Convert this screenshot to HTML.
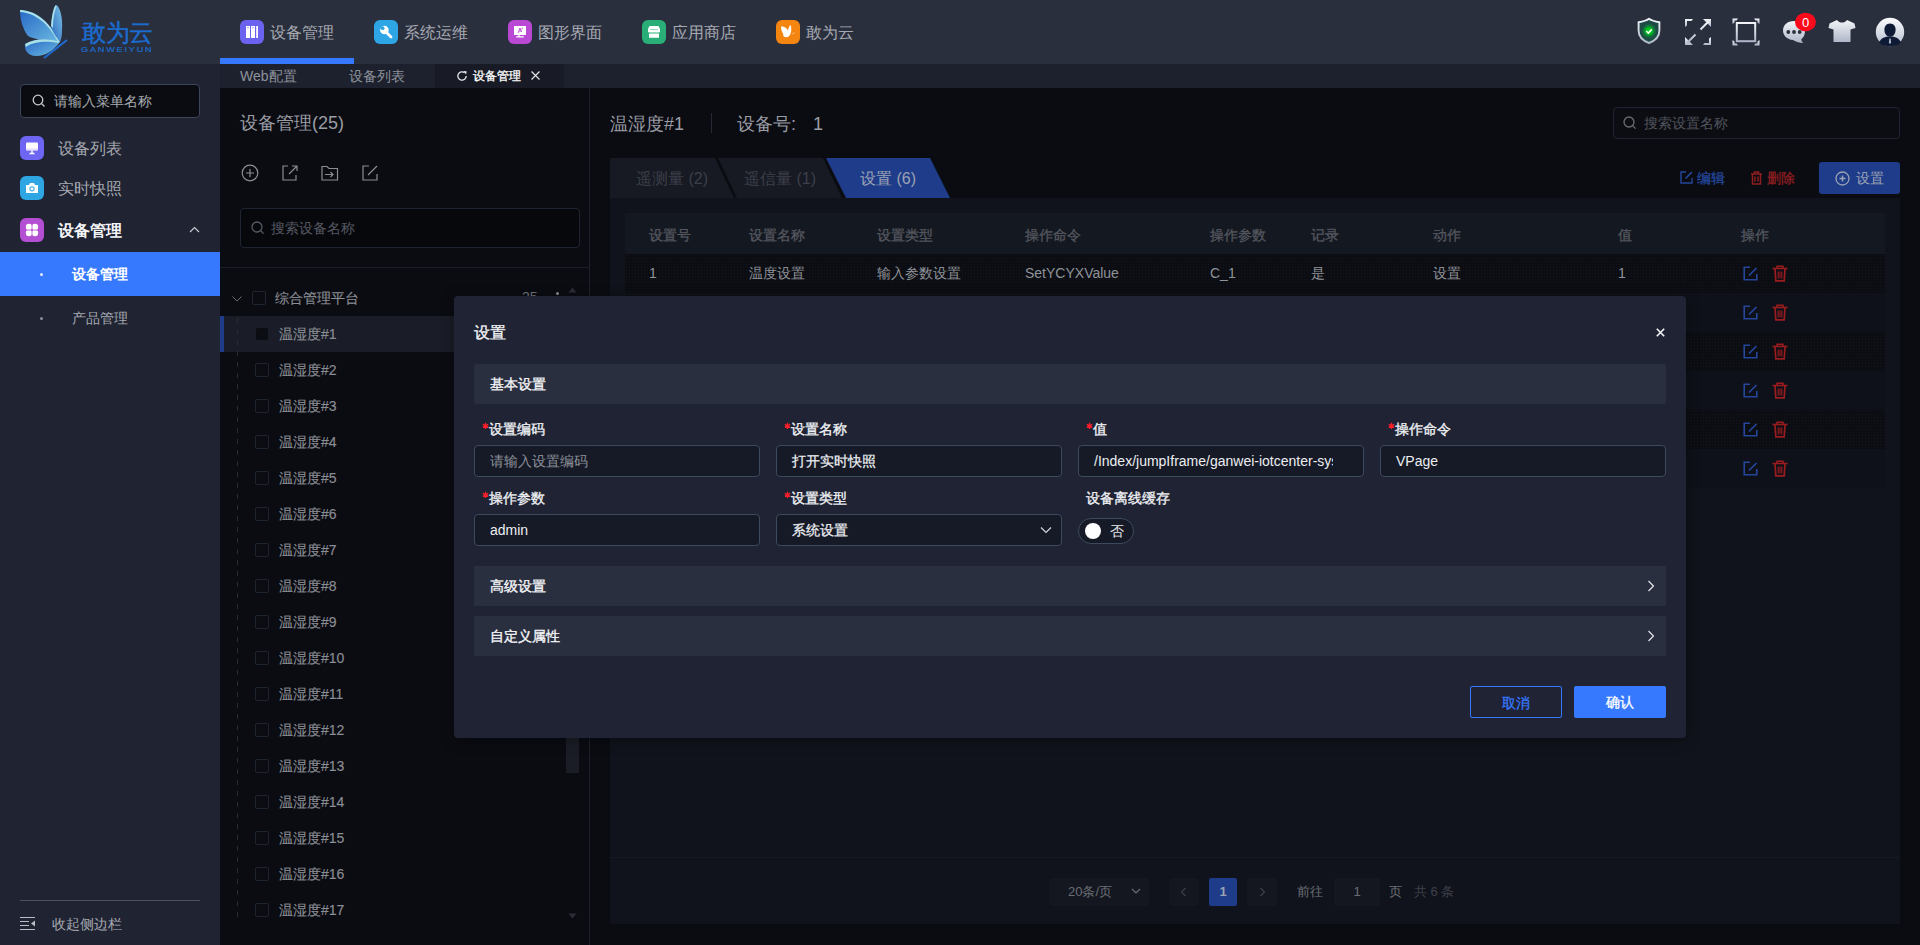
<!DOCTYPE html>
<html><head><meta charset="utf-8">
<style>
*{box-sizing:border-box;margin:0;padding:0}
html,body{width:1920px;height:945px;overflow:hidden;background:#0b0c12;font-family:"Liberation Sans",sans-serif}
.a{position:absolute}
svg{display:block}
#hdr{left:0;top:0;width:1920px;height:64px;background:#2a2f3e}
#side{left:0;top:64px;width:220px;height:881px;background:#1f2332}
#tabs{left:220px;top:64px;width:1700px;height:24px;background:#1d212e}
#main{left:220px;top:88px;width:1700px;height:857px;background:#0b0c12}
.nav{position:absolute;top:20px;height:24px;font-size:16px;line-height:24px;color:#a6a9b1;white-space:nowrap}
.nav i{position:absolute;left:0;top:0;width:24px;height:24px;border-radius:6px}
.nav span{position:absolute;left:30px;top:1px}
.t{position:absolute;white-space:nowrap}
.menu{position:absolute;left:0;width:220px;height:40px}
.menu i{position:absolute;left:20px;top:8px;width:24px;height:24px;border-radius:6px}
.menu span{position:absolute;left:58px;top:1px;line-height:40px;font-size:16px;color:#a6a9b1}
.tr{position:absolute;left:220px;width:369px;height:36px}
.tr .cb{position:absolute;left:35px;top:11px;width:14px;height:14px;border:1px solid #1f2431;border-radius:2px;background:#0b0c11}
.tr span{position:absolute;left:59px;top:0;line-height:36px;font-size:14px;color:#8a8d94;-webkit-text-stroke:0.15px #8a8d94}
.th{position:absolute;top:215px;height:41px;line-height:41px;font-size:14px;color:#54575f;-webkit-text-stroke:0.3px #54575f}
.row{position:absolute;left:625px;width:1260px;height:39px}
.row.dk{background-color:#0b0d12;background-image:radial-gradient(circle,#13161c 0.8px,transparent 0.9px);background-size:3px 3px}
.row.lt{background:#0e1119}
.cell{position:absolute;top:0;line-height:39px;font-size:14px;color:#8f9299}
.lbl{position:absolute;font-size:14px;color:#eef0f4;line-height:16px;-webkit-text-stroke:0.35px #eef0f4}
.lbl b{position:absolute;left:-7px;top:1px;width:7px;height:8px}
.inp{position:absolute;width:286px;height:32px;border:1px solid #3d4a5e;border-radius:4px;background:#161a26;font-size:14px;line-height:30px;padding-left:15px;color:#eceef2;overflow:hidden;white-space:nowrap}
</style></head><body>
<div id="hdr" class="a"></div>
<div id="side" class="a"></div>
<div id="tabs" class="a"></div>
<div id="main" class="a"></div>
<!-- header -->
<svg class="a" style="left:18px;top:4px" width="52" height="56" viewBox="0 0 52 56">
<defs>
<linearGradient id="w1" x1="0" y1="0" x2="1" y2="1"><stop offset="0" stop-color="#2768c6"/><stop offset="1" stop-color="#6cbbe2"/></linearGradient>
<linearGradient id="w2" x1="0" y1="1" x2="1" y2="0"><stop offset="0" stop-color="#2a66c0"/><stop offset="1" stop-color="#7ac4e6"/></linearGradient>
</defs>
<path d="M2 6 C14 6 30 14 42 38 C30 36 16 36 10 32 C4 24 2 14 2 6Z" fill="url(#w1)"/>
<path d="M2 6 C14 6 30 14 42 38 L40 38 C30 18 16 9 2 8Z" fill="#a8e0e8"/>
<path d="M33 22 C34 10 36 2 38 1 C42 2 45 14 44 26 C44 32 43 36 42 38 C38 32 34 28 33 22Z" fill="url(#w2)"/>
<path d="M33 22 C34 10 36 2 38 1 L38.5 3 C37 6 35 14 35 24Z" fill="#a8e0e8"/>
<path d="M7 40 C16 34 32 34 42 38 C36 46 28 52 18 52 C10 52 6 46 7 40Z" fill="url(#w1)"/>
<path d="M7 40 C16 34 32 34 42 38 L40 39 C30 37 16 37 8 43Z" fill="#a8e0e8"/>
<path d="M26 54 L49 36" stroke="#1f6ad0" stroke-width="2.2"/>
</svg>
<div class="t" style="left:82px;top:19px;font-size:23.5px;line-height:28px;color:#1b6cce;letter-spacing:-0.3px;-webkit-text-stroke:0.45px #1b6cce">敢为云</div>
<div class="t" style="left:81px;top:44px;font-size:7.6px;line-height:11px;color:#1b6cce;letter-spacing:1.5px;-webkit-text-stroke:0.2px #1b6cce;transform:scaleX(1.2);transform-origin:0 0">GANWEIYUN</div>
<div class="a" style="left:220px;top:58px;width:134px;height:6px;background:#3779fe"></div>

<div class="nav" style="left:240px"><i style="background:#6b62ef"><svg width="24" height="24"><rect x="6" y="6" width="4" height="12" fill="#fff"/><rect x="11" y="6" width="4" height="12" fill="#fff"/><rect x="16.2" y="6" width="1.8" height="12" fill="#fff"/><rect x="7.2" y="7.2" width="1.6" height="1" fill="#8d86f3"/><rect x="12.2" y="7.2" width="1.6" height="1" fill="#8d86f3"/></svg></i><span>设备管理</span></div>
<div class="nav" style="left:374px"><i style="background:#2ea5e5"><svg width="24" height="24"><circle cx="10.4" cy="10" r="4.3" fill="#fff"/><circle cx="8.6" cy="8.2" r="1.9" fill="#2ea5e5"/><path d="M7 6.5 L9 5 L6 8Z" fill="#2ea5e5"/><path d="M12.5 12.5 L17 17" stroke="#fff" stroke-width="2.8" stroke-linecap="round"/></svg></i><span>系统运维</span></div>
<div class="nav" style="left:508px"><i style="background:#b948d5"><svg width="24" height="24"><rect x="6" y="6" width="12" height="9" rx="0.6" fill="#fff"/><path d="M11 15 V16.4 M8.2 16.8 H15.8" stroke="#fff" stroke-width="1.3"/><path d="M10 13 L12 8 L13.5 12 M11 11 H13.8 M13.5 9 L15 8" fill="none" stroke="#b948d5" stroke-width="0.9"/></svg></i><span>图形界面</span></div>
<div class="nav" style="left:642px"><i style="background:#2aae77"><svg width="24" height="24"><path d="M7.5 6 H16.5 L18 9 V11.5 C18 12.3 17.3 12.6 16.5 12.6 H7.5 C6.7 12.6 6 12.3 6 11.5 V9Z" fill="#fff"/><rect x="8" y="9.2" width="8" height="0.9" fill="#7fd3b0"/><rect x="7" y="13.4" width="10" height="4.4" rx="0.5" fill="#fff"/></svg></i><span>应用商店</span></div>
<div class="nav" style="left:776px"><i style="background:#f58511"><svg width="24" height="24"><path d="M5 6.5 C8 6 11 8 12 10.5 C12.3 8.5 13.2 6 14.5 5 C15.6 6.5 15.5 10 14.8 13 C14 16 12 17.5 9.5 17.2 C7.5 17 6.8 15.5 7.3 13.8 C6 12.5 5.2 10 5 6.5Z" fill="#fff"/><circle cx="16.8" cy="13.6" r="0.6" fill="#ffd9a8"/><circle cx="18.2" cy="12.7" r="0.5" fill="#ffd9a8"/></svg></i><span>敢为云</span></div>

<!-- right icons -->
<svg class="a" style="left:1636px;top:17px" width="26" height="28" viewBox="0 0 26 28">
<defs><radialGradient id="gg" cx="0.5" cy="0.5" r="0.5"><stop offset="0" stop-color="#00d61c"/><stop offset="0.35" stop-color="#00c41e"/><stop offset="0.6" stop-color="#0f7a3a"/><stop offset="0.9" stop-color="#1d4a44"/></radialGradient>
<linearGradient id="sil" x1="0" y1="0" x2="0" y2="1"><stop offset="0" stop-color="#f2f4f8"/><stop offset="1" stop-color="#aeb6c8"/></linearGradient></defs>
<path d="M13 1.8 C10.5 3.6 6.5 4.6 2.6 5.2 V13.5 C2.6 19.5 7 23.8 13 26 C19 23.8 23.4 19.5 23.4 13.5 V5.2 C19.5 4.6 15.5 3.6 13 1.8Z" fill="#1d4a44" stroke="url(#sil)" stroke-width="1.9"/>
<circle cx="13" cy="14" r="8.5" fill="url(#gg)"/>
<path d="M10.2 14 L12.3 16 L15.8 12.4" stroke="#fff" stroke-width="1.6" fill="none"/>
</svg>
<svg class="a" style="left:1684px;top:18px" width="28" height="28" viewBox="0 0 28 28">
<g fill="url(#sil)"><path d="M1 1 H9 L7.5 3 H3 V7.5 L1 9Z"/><path d="M27 27 H19 L20.5 25 H25 V20.5 L27 19Z"/>
<path d="M19 1 H27 V9Z"/><path d="M1 19 V27 H9Z"/></g>
<path d="M24.5 3.5 L16.5 11.5 M3.5 24.5 L11.5 16.5" stroke="url(#sil)" stroke-width="2.1"/>
</svg>
<svg class="a" style="left:1732px;top:18px" width="28" height="28" viewBox="0 0 28 28">
<g fill="url(#sil)"><path d="M0.5 0.5 H6 L4.5 2.5 H2.5 V4.5 L0.5 6Z"/><path d="M27.5 0.5 H22 L23.5 2.5 H25.5 V4.5 L27.5 6Z"/><path d="M0.5 27.5 H6 L4.5 25.5 H2.5 V23.5 L0.5 22Z"/><path d="M27.5 27.5 H22 L23.5 25.5 H25.5 V23.5 L27.5 22Z"/></g>
<rect x="4.8" y="5" width="18.4" height="18.2" fill="none" stroke="url(#sil)" stroke-width="2"/>
</svg>
<svg class="a" style="left:1782px;top:12px" width="36" height="34" viewBox="0 0 36 34">
<path d="M12 9 C5.5 9 1 13 1 18.5 C1 23.5 5 27.5 11 28 C14 30 18 31 21.5 31 C19.5 29.5 19 28 19.5 27 C21.8 25.5 23 22.5 23 18.5 C23 13 18.5 9 12 9Z" fill="url(#sil)"/>
<circle cx="6.3" cy="20" r="1.9" fill="#2a2f3e"/><circle cx="12" cy="20" r="1.9" fill="#2a2f3e"/><circle cx="17.7" cy="20" r="1.9" fill="#2a2f3e"/>
<ellipse cx="23.5" cy="10" rx="10.5" ry="9.2" fill="#fb0a1c"/>
<text x="23.5" y="14.5" font-size="13" fill="#fff" text-anchor="middle" font-family="Liberation Sans">0</text>
</svg>
<svg class="a" style="left:1828px;top:19px" width="28" height="24" viewBox="0 0 28 24">
<path d="M9 1 C10.5 3 12 3.5 14 3.5 C16 3.5 17.5 3 19 1 L26.5 4.5 L27.5 9 L22.5 10.5 V23 H5.5 V10.5 L0.5 9 L1.5 4.5Z" fill="url(#sil)"/>
</svg>
<svg class="a" style="left:1875px;top:17px" width="30" height="30" viewBox="0 0 30 30">
<defs><linearGradient id="av" x1="0" y1="0" x2="0" y2="1"><stop offset="0" stop-color="#fbfcfd"/><stop offset="1" stop-color="#b5bdcf"/></linearGradient></defs>
<circle cx="15" cy="15" r="14.2" fill="url(#av)"/>
<path d="M15 6.5 C18.6 6.5 20.6 9.3 20.6 12.8 C20.6 16.5 18.4 19.8 15 19.8 C11.6 19.8 9.4 16.5 9.4 12.8 C9.4 9.3 11.4 6.5 15 6.5Z" fill="#0e1a36"/>
<path d="M4 25.5 C6 21 10 19.5 15 19.5 C20 19.5 24 21 26 25.5 C23.5 28 19.5 29.3 15 29.3 C10.5 29.3 6.5 28 4 25.5Z" fill="#0e1a36"/>
<path d="M14.3 21.5 H15.7 L16.1 25.5 L15 27.3 L13.9 25.5Z" fill="#aab2c4"/>
</svg>

<!-- sidebar -->
<div class="a" style="left:20px;top:84px;width:180px;height:34px;border:1px solid #3d455a;border-radius:4px;background:#0b0c11"></div>
<svg class="a" style="left:32px;top:94px" width="14" height="14" viewBox="0 0 14 14"><circle cx="6" cy="6" r="4.8" fill="none" stroke="#c6c9d0" stroke-width="1.3"/><path d="M9.5 9.5 L12.5 12.5" stroke="#c6c9d0" stroke-width="1.3"/></svg>
<div class="t" style="left:54px;top:92px;font-size:14px;line-height:18px;color:#a9acb3">请输入菜单名称</div>

<div class="menu" style="top:128px"><i style="background:#6e66f2"><svg width="24" height="24"><rect x="6" y="6.5" width="12" height="8" rx="1" fill="#fff"/><rect x="6" y="12.5" width="12" height="1.2" fill="#e7d5ff"/><path d="M12 14.5 V17 M9.5 17.5 H14.5" stroke="#fff" stroke-width="1.5"/></svg></i><span>设备列表</span></div>
<div class="menu" style="top:168px"><i style="background:#2ea6e4"><svg width="24" height="24"><path d="M6 9 H9 L10 7 H14 L15 9 H18 V17 H6Z" fill="#fff"/><circle cx="12" cy="12.8" r="2.6" fill="#2ea6e4"/><circle cx="12" cy="12.8" r="1.6" fill="#fff"/></svg></i><span>实时快照</span></div>
<div class="menu" style="top:210px"><i style="background:#b44fd3;top:8px"><svg width="24" height="24"><circle cx="9" cy="9" r="3.2" fill="#fff"/><circle cx="15" cy="9" r="3.2" fill="#fff"/><circle cx="9" cy="15" r="3.2" fill="#fff"/><circle cx="15" cy="15" r="3.2" fill="#fff"/><path d="M12 5 V19 M5 12 H19" stroke="#b44fd3" stroke-width="0.8"/></svg></i><span style="color:#f4f5f8;font-weight:bold">设备管理</span></div>
<svg class="a" style="left:189px;top:226px" width="11" height="7" viewBox="0 0 11 7"><path d="M1 6 L5.5 1.5 L10 6" fill="none" stroke="#c8cbd2" stroke-width="1.2"/></svg>
<div class="a" style="left:0;top:252px;width:220px;height:44px;background:#3779fe"></div>
<div class="a" style="left:40px;top:273px;width:3px;height:3px;border-radius:2px;background:#e8eefc"></div>
<div class="t" style="left:72px;top:265px;font-size:14px;line-height:18px;color:#fff;font-weight:bold">设备管理</div>
<div class="a" style="left:40px;top:317px;width:3px;height:3px;border-radius:2px;background:#8d9097"></div>
<div class="t" style="left:72px;top:309px;font-size:14px;line-height:18px;color:#a6a9b1">产品管理</div>
<div class="a" style="left:20px;top:900px;width:180px;height:1px;background:#4a5064"></div>
<svg class="a" style="left:20px;top:916px" width="16" height="15" viewBox="0 0 16 15"><path d="M0 1.5 H15 M0 5.5 H9 M0 9.5 H9 M0 13.5 H15" stroke="#b9bcc3" stroke-width="1.2"/><path d="M15 4.5 V10.5 L11 7.5Z" fill="#b9bcc3"/></svg>
<div class="t" style="left:52px;top:915px;font-size:14px;line-height:18px;color:#a6a9b1">收起侧边栏</div>

<!-- tab bar -->
<div class="t" style="left:240px;top:67px;font-size:14px;line-height:18px;color:#8e929b">Web配置</div>
<div class="t" style="left:349px;top:67px;font-size:14px;line-height:18px;color:#8e929b">设备列表</div>
<div class="a" style="left:435px;top:64px;width:129px;height:24px;background:#181b25"></div>
<svg class="a" style="left:456px;top:70px" width="12" height="12" viewBox="0 0 12 12"><path d="M10.2 6 A4.2 4.2 0 1 1 8.6 2.7" fill="none" stroke="#e5e7eb" stroke-width="1.3"/><path d="M7.2 1 L10.6 1.2 L10.2 4.4Z" fill="#e5e7eb"/></svg>
<div class="t" style="left:473px;top:68px;font-size:12px;line-height:16px;color:#fff;-webkit-text-stroke:0.3px #fff">设备管理</div>
<svg class="a" style="left:531px;top:71px" width="9" height="9" viewBox="0 0 9 9"><path d="M0.5 0.5 L8.5 8.5 M8.5 0.5 L0.5 8.5" stroke="#e0e2e6" stroke-width="1.2"/></svg>
<!-- tree panel -->
<div class="a" style="left:589px;top:88px;width:1px;height:857px;background:#1c202c"></div>
<div class="t" style="left:240px;top:112px;font-size:18px;line-height:22px;color:#9a9da4">设备管理(25)</div>
<svg class="a" style="left:240px;top:164px" width="140" height="19" viewBox="0 0 140 19">
<g fill="none" stroke="#8a8d94" stroke-width="1.2">
<circle cx="10" cy="9" r="7.8"/><path d="M10 5 V13 M6 9 H14"/>
<path d="M48 2 H43 V16 H56 V11"/><path d="M52 2 H57 V7 M57 2 L49 10"/>
<path d="M82 2.5 H87 L89 4.5 H97.5 V16 H82Z"/><path d="M85 10.5 H93 M90.5 8 L93 10.5 L90.5 13"/>
<path d="M129 2 H123 V16 H137 V10"/><path d="M137 2 L128 11"/>
</g></svg>
<div class="a" style="left:240px;top:208px;width:340px;height:40px;border:1px solid #1f2433;border-radius:4px;background:#07080c"></div>
<svg class="a" style="left:251px;top:221px" width="14" height="14" viewBox="0 0 14 14"><circle cx="6" cy="6" r="5" fill="none" stroke="#575b66" stroke-width="1.3"/><path d="M9.6 9.6 L12.6 12.6" stroke="#575b66" stroke-width="1.3"/></svg>
<div class="t" style="left:271px;top:219px;font-size:14px;line-height:18px;color:#555862">搜索设备名称</div>
<div class="a" style="left:220px;top:267px;width:369px;height:1px;background:#1a1e2a"></div>

<svg class="a" style="left:231px;top:295px" width="12" height="8" viewBox="0 0 12 8"><path d="M1.5 1.5 L6 6 L10.5 1.5" fill="none" stroke="#6a6d75" stroke-width="1"/></svg>
<div class="tr" style="top:280px"><div class="cb" style="left:32px"></div><span style="left:55px">综合管理平台</span></div>
<div class="t" style="left:522px;top:288px;font-size:14px;line-height:18px;color:#6f727a">25</div>
<div class="a" style="left:556px;top:292px;width:3px;height:3px;border-radius:2px;background:#8a8d94"></div>
<div class="a" style="left:556px;top:297px;width:3px;height:3px;border-radius:2px;background:#8a8d94"></div>
<svg class="a" style="left:568px;top:287px" width="9" height="6" viewBox="0 0 9 6"><path d="M0.5 5.5 L4.5 0.5 L8.5 5.5Z" fill="#2a2d36"/></svg>
<div class="a" style="left:220px;top:316px;width:369px;height:36px;background:#1a1d27"></div>
<div class="a" style="left:220px;top:316px;width:4px;height:36px;background:#1f3c8a"></div>
<div class="a" style="left:237px;top:318px;width:1px;height:604px;background:repeating-linear-gradient(to bottom,#282b33 0 5px,transparent 5px 11px)"></div>
<div class="tr" style="top:316px"><div class="cb" style="border:none;left:36px;top:12px;width:12px;height:12px;background:#0c0d12"></div><span>温湿度#1</span></div>
<div class="tr" style="top:352px"><div class="cb"></div><span>温湿度#2</span></div>
<div class="tr" style="top:388px"><div class="cb"></div><span>温湿度#3</span></div>
<div class="tr" style="top:424px"><div class="cb"></div><span>温湿度#4</span></div>
<div class="tr" style="top:460px"><div class="cb"></div><span>温湿度#5</span></div>
<div class="tr" style="top:496px"><div class="cb"></div><span>温湿度#6</span></div>
<div class="tr" style="top:532px"><div class="cb"></div><span>温湿度#7</span></div>
<div class="tr" style="top:568px"><div class="cb"></div><span>温湿度#8</span></div>
<div class="tr" style="top:604px"><div class="cb"></div><span>温湿度#9</span></div>
<div class="tr" style="top:640px"><div class="cb"></div><span>温湿度#10</span></div>
<div class="tr" style="top:676px"><div class="cb"></div><span>温湿度#11</span></div>
<div class="tr" style="top:712px"><div class="cb"></div><span>温湿度#12</span></div>
<div class="tr" style="top:748px"><div class="cb"></div><span>温湿度#13</span></div>
<div class="tr" style="top:784px"><div class="cb"></div><span>温湿度#14</span></div>
<div class="tr" style="top:820px"><div class="cb"></div><span>温湿度#15</span></div>
<div class="tr" style="top:856px"><div class="cb"></div><span>温湿度#16</span></div>
<div class="tr" style="top:892px"><div class="cb"></div><span>温湿度#17</span></div>
<div class="a" style="left:566px;top:700px;width:13px;height:73px;background:#1a1d26"></div>
<svg class="a" style="left:568px;top:913px" width="9" height="6" viewBox="0 0 9 6"><path d="M0.5 0.5 L4.5 5.5 L8.5 0.5Z" fill="#2a2d36"/></svg>

<!-- right panel -->
<div class="t" style="left:610px;top:113px;font-size:18px;line-height:22px;color:#9a9da4">温湿度#1</div>
<div class="a" style="left:711px;top:113px;width:1px;height:20px;background:#262a36"></div>
<div class="t" style="left:737px;top:113px;font-size:18px;line-height:22px;color:#9a9da4">设备号</div><div class="t" style="left:791px;top:113px;font-size:18px;line-height:22px;color:#9a9da4">:</div><div class="t" style="left:813px;top:113px;font-size:18px;line-height:22px;color:#9a9da4">1</div>
<div class="a" style="left:1613px;top:107px;width:287px;height:32px;border:1px solid #1f2433;border-radius:4px;background:#0c0d12"></div>
<svg class="a" style="left:1623px;top:116px" width="14" height="14" viewBox="0 0 14 14"><circle cx="6" cy="6" r="5" fill="none" stroke="#6a6d75" stroke-width="1.3"/><path d="M9.6 9.6 L12.6 12.6" stroke="#6a6d75" stroke-width="1.3"/></svg>
<div class="t" style="left:1644px;top:114px;font-size:14px;line-height:18px;color:#50535c">搜索设置名称</div>

<div class="a" style="left:610px;top:198px;width:1290px;height:726px;background:#10131b"></div>
<svg class="a" style="left:610px;top:158px" width="360" height="40" viewBox="0 0 360 40">
<path d="M0 0 H105 L124 40 H0Z" fill="#171a23"/>
<path d="M108 0 H213 L232 40 H127Z" fill="#171a23"/>
<path d="M216 0 H320 L340 40 H236Z" fill="#1f3c8a"/>
</svg>
<div class="t" style="left:636px;top:169px;font-size:16px;line-height:20px;color:#3c3f49">遥测量 (2)</div>
<div class="t" style="left:744px;top:169px;font-size:16px;line-height:20px;color:#3c3f49">遥信量 (1)</div>
<div class="t" style="left:860px;top:169px;font-size:16px;line-height:20px;color:#9ba2b3">设置 (6)</div>

<svg class="a" style="left:1680px;top:171px" width="13" height="13" viewBox="0 0 13 13"><path d="M6 1 H1 V12 H12 V7" fill="none" stroke="#24479c" stroke-width="1.4"/><path d="M12 1 L5.5 7.5" stroke="#24479c" stroke-width="1.6"/></svg>
<div class="t" style="left:1697px;top:169px;font-size:14px;line-height:18px;color:#24479c;-webkit-text-stroke:0.3px #24479c">编辑</div>
<svg class="a" style="left:1750px;top:171px" width="13" height="14" viewBox="0 0 13 14"><path d="M1 3 H12 M4.5 3 V1 H8.5 V3 M2.5 3 V13 H10.5 V3 M5 5.5 V10.5 M8 5.5 V10.5" fill="none" stroke="#8f1e21" stroke-width="1.5"/></svg>
<div class="t" style="left:1767px;top:169px;font-size:14px;line-height:18px;color:#8f1e21;-webkit-text-stroke:0.3px #8f1e21">删除</div>
<div class="a" style="left:1819px;top:162px;width:81px;height:32px;background:#1f3c8a;border-radius:3px"></div>
<svg class="a" style="left:1835px;top:171px" width="15" height="15" viewBox="0 0 15 15"><circle cx="7.5" cy="7.5" r="6.5" fill="none" stroke="#9aa2b4" stroke-width="1.3"/><path d="M7.5 4.5 V10.5 M4.5 7.5 H10.5" stroke="#9aa2b4" stroke-width="1.5"/></svg>
<div class="t" style="left:1856px;top:169px;font-size:14px;line-height:18px;color:#9aa2b4">设置</div>

<div class="a" style="left:625px;top:213px;width:1260px;height:41px;background:#141821"></div>
<div class="th" style="left:649px">设置号</div>
<div class="th" style="left:749px">设置名称</div>
<div class="th" style="left:877px">设置类型</div>
<div class="th" style="left:1025px">操作命令</div>
<div class="th" style="left:1210px">操作参数</div>
<div class="th" style="left:1311px">记录</div>
<div class="th" style="left:1433px">动作</div>
<div class="th" style="left:1618px">值</div>
<div class="th" style="left:1741px">操作</div>
<div class="row dk" style="top:254px"></div>
<div class="row lt" style="top:293px"></div>
<div class="row dk" style="top:332px"></div>
<div class="row lt" style="top:371px"></div>
<div class="row dk" style="top:410px"></div>
<div class="row lt" style="top:449px"></div>
<div class="cell" style="left:649px;top:254px">1</div>
<div class="cell" style="left:749px;top:254px">温度设置</div>
<div class="cell" style="left:877px;top:254px">输入参数设置</div>
<div class="cell" style="left:1025px;top:254px">SetYCYXValue</div>
<div class="cell" style="left:1210px;top:254px">C_1</div>
<div class="cell" style="left:1311px;top:254px">是</div>
<div class="cell" style="left:1433px;top:254px">设置</div>
<div class="cell" style="left:1618px;top:254px">1</div>
<svg class="a" style="left:1743px;top:266px" width="15" height="15" viewBox="0 0 15 15"><path d="M7 1.2 H1.2 V13.8 H13.8 V8" fill="none" stroke="#24479c" stroke-width="1.6"/><path d="M13.5 2 L6 9.5" stroke="#24479c" stroke-width="1.7"/></svg>
<svg class="a" style="left:1772px;top:265px" width="16" height="17" viewBox="0 0 16 17"><path d="M0.5 3.5 H15.5" stroke="#9a1c1f" stroke-width="1.6"/><path d="M5 3.5 V1.2 H11 V3.5" fill="none" stroke="#9a1c1f" stroke-width="1.5"/><path d="M3 4 L3.8 15.8 H12.2 L13 4" fill="none" stroke="#9a1c1f" stroke-width="1.7"/><path d="M6.2 6.5 V13.5 M8 6.5 V13.5 M9.8 6.5 V13.5" stroke="#9a1c1f" stroke-width="1.1"/></svg>
<svg class="a" style="left:1743px;top:305px" width="15" height="15" viewBox="0 0 15 15"><path d="M7 1.2 H1.2 V13.8 H13.8 V8" fill="none" stroke="#24479c" stroke-width="1.6"/><path d="M13.5 2 L6 9.5" stroke="#24479c" stroke-width="1.7"/></svg>
<svg class="a" style="left:1772px;top:304px" width="16" height="17" viewBox="0 0 16 17"><path d="M0.5 3.5 H15.5" stroke="#9a1c1f" stroke-width="1.6"/><path d="M5 3.5 V1.2 H11 V3.5" fill="none" stroke="#9a1c1f" stroke-width="1.5"/><path d="M3 4 L3.8 15.8 H12.2 L13 4" fill="none" stroke="#9a1c1f" stroke-width="1.7"/><path d="M6.2 6.5 V13.5 M8 6.5 V13.5 M9.8 6.5 V13.5" stroke="#9a1c1f" stroke-width="1.1"/></svg>
<svg class="a" style="left:1743px;top:344px" width="15" height="15" viewBox="0 0 15 15"><path d="M7 1.2 H1.2 V13.8 H13.8 V8" fill="none" stroke="#24479c" stroke-width="1.6"/><path d="M13.5 2 L6 9.5" stroke="#24479c" stroke-width="1.7"/></svg>
<svg class="a" style="left:1772px;top:343px" width="16" height="17" viewBox="0 0 16 17"><path d="M0.5 3.5 H15.5" stroke="#9a1c1f" stroke-width="1.6"/><path d="M5 3.5 V1.2 H11 V3.5" fill="none" stroke="#9a1c1f" stroke-width="1.5"/><path d="M3 4 L3.8 15.8 H12.2 L13 4" fill="none" stroke="#9a1c1f" stroke-width="1.7"/><path d="M6.2 6.5 V13.5 M8 6.5 V13.5 M9.8 6.5 V13.5" stroke="#9a1c1f" stroke-width="1.1"/></svg>
<svg class="a" style="left:1743px;top:383px" width="15" height="15" viewBox="0 0 15 15"><path d="M7 1.2 H1.2 V13.8 H13.8 V8" fill="none" stroke="#24479c" stroke-width="1.6"/><path d="M13.5 2 L6 9.5" stroke="#24479c" stroke-width="1.7"/></svg>
<svg class="a" style="left:1772px;top:382px" width="16" height="17" viewBox="0 0 16 17"><path d="M0.5 3.5 H15.5" stroke="#9a1c1f" stroke-width="1.6"/><path d="M5 3.5 V1.2 H11 V3.5" fill="none" stroke="#9a1c1f" stroke-width="1.5"/><path d="M3 4 L3.8 15.8 H12.2 L13 4" fill="none" stroke="#9a1c1f" stroke-width="1.7"/><path d="M6.2 6.5 V13.5 M8 6.5 V13.5 M9.8 6.5 V13.5" stroke="#9a1c1f" stroke-width="1.1"/></svg>
<svg class="a" style="left:1743px;top:422px" width="15" height="15" viewBox="0 0 15 15"><path d="M7 1.2 H1.2 V13.8 H13.8 V8" fill="none" stroke="#24479c" stroke-width="1.6"/><path d="M13.5 2 L6 9.5" stroke="#24479c" stroke-width="1.7"/></svg>
<svg class="a" style="left:1772px;top:421px" width="16" height="17" viewBox="0 0 16 17"><path d="M0.5 3.5 H15.5" stroke="#9a1c1f" stroke-width="1.6"/><path d="M5 3.5 V1.2 H11 V3.5" fill="none" stroke="#9a1c1f" stroke-width="1.5"/><path d="M3 4 L3.8 15.8 H12.2 L13 4" fill="none" stroke="#9a1c1f" stroke-width="1.7"/><path d="M6.2 6.5 V13.5 M8 6.5 V13.5 M9.8 6.5 V13.5" stroke="#9a1c1f" stroke-width="1.1"/></svg>
<svg class="a" style="left:1743px;top:461px" width="15" height="15" viewBox="0 0 15 15"><path d="M7 1.2 H1.2 V13.8 H13.8 V8" fill="none" stroke="#24479c" stroke-width="1.6"/><path d="M13.5 2 L6 9.5" stroke="#24479c" stroke-width="1.7"/></svg>
<svg class="a" style="left:1772px;top:460px" width="16" height="17" viewBox="0 0 16 17"><path d="M0.5 3.5 H15.5" stroke="#9a1c1f" stroke-width="1.6"/><path d="M5 3.5 V1.2 H11 V3.5" fill="none" stroke="#9a1c1f" stroke-width="1.5"/><path d="M3 4 L3.8 15.8 H12.2 L13 4" fill="none" stroke="#9a1c1f" stroke-width="1.7"/><path d="M6.2 6.5 V13.5 M8 6.5 V13.5 M9.8 6.5 V13.5" stroke="#9a1c1f" stroke-width="1.1"/></svg>
<div class="a" style="left:610px;top:857px;width:1290px;height:1px;background:#161a22"></div>
<div class="a" style="left:1049px;top:878px;width:100px;height:28px;background:#141720;border-radius:2px"></div>
<div class="t" style="left:1068px;top:884px;font-size:13px;line-height:16px;color:#6a6d75">20条/页</div>
<svg class="a" style="left:1131px;top:888px" width="10" height="7" viewBox="0 0 10 7"><path d="M1 1 L5 5 L9 1" fill="none" stroke="#6a6d75" stroke-width="1.2"/></svg>
<div class="a" style="left:1169px;top:878px;width:30px;height:28px;background:#141720;border-radius:2px"></div>
<svg class="a" style="left:1180px;top:887px" width="7" height="10" viewBox="0 0 7 10"><path d="M5.5 1 L1.5 5 L5.5 9" fill="none" stroke="#3d4049" stroke-width="1.2"/></svg>
<div class="a" style="left:1209px;top:878px;width:28px;height:28px;background:#1f3c8a;border-radius:2px"></div>
<div class="t" style="left:1209px;top:884px;width:28px;text-align:center;font-size:13px;line-height:16px;color:#9aa2b4;font-weight:bold">1</div>
<div class="a" style="left:1247px;top:878px;width:30px;height:28px;background:#141720;border-radius:2px"></div>
<svg class="a" style="left:1259px;top:887px" width="7" height="10" viewBox="0 0 7 10"><path d="M1.5 1 L5.5 5 L1.5 9" fill="none" stroke="#3d4049" stroke-width="1.2"/></svg>
<div class="t" style="left:1297px;top:884px;font-size:13px;line-height:16px;color:#6a6d75">前往</div>
<div class="a" style="left:1334px;top:878px;width:46px;height:28px;background:#141720;border-radius:2px"></div>
<div class="t" style="left:1334px;top:884px;width:46px;text-align:center;font-size:13px;line-height:16px;color:#6a6d75">1</div>
<div class="t" style="left:1389px;top:884px;font-size:13px;line-height:16px;color:#6a6d75">页</div>
<div class="t" style="left:1414px;top:884px;font-size:13px;line-height:16px;color:#3d4049">共 6 条</div>
<!-- modal -->
<div class="a" style="left:454px;top:296px;width:1232px;height:442px;background:#1f2333;border-radius:4px;box-shadow:0 2px 14px rgba(0,0,0,0.35)"></div>
<div class="t" style="left:474px;top:323px;font-size:16px;line-height:20px;color:#f4f5f7;-webkit-text-stroke:0.3px #f4f5f7">设置</div>
<svg class="a" style="left:1656px;top:328px" width="9" height="9" viewBox="0 0 9 9"><path d="M0.8 0.8 L8.2 8.2 M8.2 0.8 L0.8 8.2" stroke="#f4f5f7" stroke-width="1.6"/></svg>
<div class="a" style="left:474px;top:364px;width:1192px;height:40px;background:#2a2f40;border-radius:2px"></div>
<div class="t" style="left:490px;top:375px;font-size:14px;line-height:18px;color:#f4f5f7;-webkit-text-stroke:0.35px #f4f5f7">基本设置</div>

<div class="lbl" style="left:489px;top:421px"><b><svg width="7" height="8" viewBox="0 0 7 8"><path d="M3.5 0.8 V7 M0.8 2.4 L6.2 5.4 M6.2 2.4 L0.8 5.4" stroke="#ff1f2a" stroke-width="1.3"/></svg></b>设置编码</div>
<div class="lbl" style="left:791px;top:421px"><b><svg width="7" height="8" viewBox="0 0 7 8"><path d="M3.5 0.8 V7 M0.8 2.4 L6.2 5.4 M6.2 2.4 L0.8 5.4" stroke="#ff1f2a" stroke-width="1.3"/></svg></b>设置名称</div>
<div class="lbl" style="left:1093px;top:421px"><b><svg width="7" height="8" viewBox="0 0 7 8"><path d="M3.5 0.8 V7 M0.8 2.4 L6.2 5.4 M6.2 2.4 L0.8 5.4" stroke="#ff1f2a" stroke-width="1.3"/></svg></b>值</div>
<div class="lbl" style="left:1395px;top:421px"><b><svg width="7" height="8" viewBox="0 0 7 8"><path d="M3.5 0.8 V7 M0.8 2.4 L6.2 5.4 M6.2 2.4 L0.8 5.4" stroke="#ff1f2a" stroke-width="1.3"/></svg></b>操作命令</div>
<div class="inp" style="left:474px;top:445px;color:#8c909a">请输入设置编码</div>
<div class="inp" style="left:776px;top:445px;-webkit-text-stroke:0.25px #eceef2">打开实时快照</div>
<div class="inp" style="left:1078px;top:445px"><div style="width:239px;overflow:hidden">/Index/jumpIframe/ganwei-iotcenter-system</div></div>
<div class="inp" style="left:1380px;top:445px">VPage</div>

<div class="lbl" style="left:489px;top:490px"><b><svg width="7" height="8" viewBox="0 0 7 8"><path d="M3.5 0.8 V7 M0.8 2.4 L6.2 5.4 M6.2 2.4 L0.8 5.4" stroke="#ff1f2a" stroke-width="1.3"/></svg></b>操作参数</div>
<div class="lbl" style="left:791px;top:490px"><b><svg width="7" height="8" viewBox="0 0 7 8"><path d="M3.5 0.8 V7 M0.8 2.4 L6.2 5.4 M6.2 2.4 L0.8 5.4" stroke="#ff1f2a" stroke-width="1.3"/></svg></b>设置类型</div>
<div class="lbl" style="left:1086px;top:490px">设备离线缓存</div>
<div class="inp" style="left:474px;top:514px">admin</div>
<div class="inp" style="left:776px;top:514px;-webkit-text-stroke:0.25px #eceef2">系统设置</div>
<svg class="a" style="left:1040px;top:526px" width="12" height="8" viewBox="0 0 12 8"><path d="M1 1.5 L6 6.5 L11 1.5" fill="none" stroke="#d8dbe1" stroke-width="1.1"/></svg>
<div class="a" style="left:1078px;top:518px;width:56px;height:26px;border:1px solid #3d4a5e;border-radius:13px;background:#161a26"></div>
<div class="a" style="left:1085px;top:523px;width:16px;height:16px;border-radius:8px;background:#fff"></div>
<div class="t" style="left:1110px;top:522px;font-size:14px;line-height:18px;color:#e6e8ec">否</div>

<div class="a" style="left:474px;top:566px;width:1192px;height:40px;background:#2a2f40"></div>
<div class="t" style="left:490px;top:577px;font-size:14px;line-height:18px;color:#f4f5f7;-webkit-text-stroke:0.35px #f4f5f7">高级设置</div>
<svg class="a" style="left:1647px;top:580px" width="8" height="12" viewBox="0 0 8 12"><path d="M1.5 1 L6.5 6 L1.5 11" fill="none" stroke="#e6e8ec" stroke-width="1.15"/></svg>
<div class="a" style="left:474px;top:616px;width:1192px;height:40px;background:#2a2f40"></div>
<div class="t" style="left:490px;top:627px;font-size:14px;line-height:18px;color:#f4f5f7;-webkit-text-stroke:0.35px #f4f5f7">自定义属性</div>
<svg class="a" style="left:1647px;top:630px" width="8" height="12" viewBox="0 0 8 12"><path d="M1.5 1 L6.5 6 L1.5 11" fill="none" stroke="#e6e8ec" stroke-width="1.15"/></svg>

<div class="a" style="left:1470px;top:686px;width:92px;height:32px;border:1px solid #3779fe;border-radius:2px"></div>
<div class="t" style="left:1470px;top:694px;width:92px;text-align:center;font-size:14px;line-height:18px;color:#3779fe;-webkit-text-stroke:0.3px #3779fe">取消</div>
<div class="a" style="left:1574px;top:686px;width:92px;height:32px;background:#3779fe;border-radius:2px"></div>
<div class="t" style="left:1574px;top:693px;width:92px;text-align:center;font-size:14px;line-height:18px;color:#fff;-webkit-text-stroke:0.3px #fff">确认</div>
</body></html>
